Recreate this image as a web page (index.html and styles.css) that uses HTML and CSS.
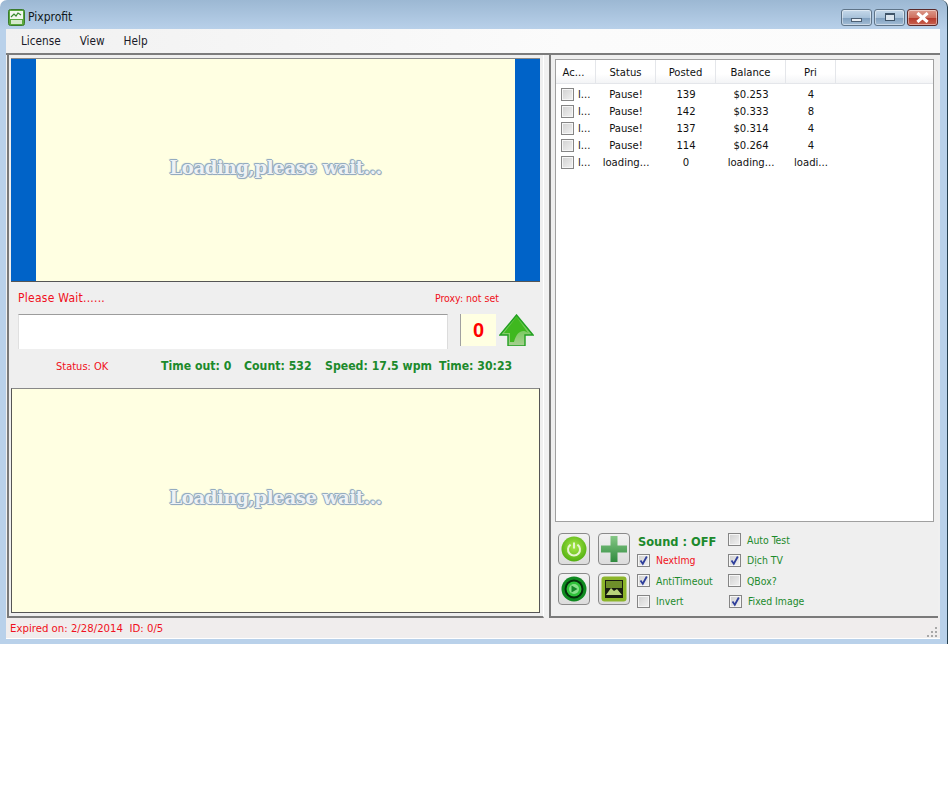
FILE: index.html
```html
<!DOCTYPE html>
<html lang="en">
<head>
<meta charset="utf-8">
<title>Pixprofit</title>
<link rel="stylesheet" href="styles.css">
</head>
<body>
<svg class="defs" width="0" height="0">
  <symbol id="tick" viewBox="0 0 11 11"><path d="M2.500 5.500l2.300 3.300L8.800 1.500" fill="none" stroke="#2f3f9c" stroke-width="1.800"/></symbol>
</svg>
<div class="window">
  <header class="titlebar">
    <svg class="app-icon" width="17" height="17" viewBox="0 0 17 17">
      <rect x="0.5" y="0.5" width="16" height="16" rx="2" fill="#5aa83c" stroke="#3a7a2e"/>
      <rect x="2" y="2" width="13" height="8" fill="#f2f7ee"/>
      <path d="M3 8l3-3 2 2 2-3 3 2" fill="none" stroke="#3a8a2e" stroke-width="1.2"/>
      <rect x="3" y="11" width="11" height="4" fill="#d5e8cc"/>
    </svg>
    <span class="title">Pixprofit</span>
    <div class="controls-win">
      <div class="wbtn"><span class="min-glyph"></span></div>
      <div class="wbtn"><span class="max-glyph"></span></div>
      <div class="wbtn close">
        <svg width="15" height="11" viewBox="0 0 15 11"><path d="M3.500 2l8 7M11.500 2l-8 7" stroke="#fff" stroke-width="3" stroke-linecap="square"/></svg>
      </div>
    </div>
  </header>
  <div class="client">
    <nav class="menu"><span>License</span><span>View</span><span>Help</span></nav>
    <div class="split">
      <section class="left">
        <div class="panel top-panel">
          <div class="blue"></div>
          <div class="stage"><span class="loading">Loading,please wait...</span></div>
          <div class="blue"></div>
        </div>
        <div class="msg-row"><span class="wait">Please Wait......</span><span class="proxy">Proxy: not set</span></div>
        <div class="input-row">
          <div class="answer"></div>
          <div class="count">0</div>
          <svg class="arrow" width="35" height="32" viewBox="0 0 35 32">
            <defs><linearGradient id="ag" x1="0" y1="0" x2="0" y2="1"><stop offset="0" stop-color="#4ec42e"/><stop offset="1" stop-color="#a8cf92"/></linearGradient></defs>
            <path d="M17.5 1L34 21H26V32H9V21H1Z" fill="url(#ag)" stroke="#22a020" stroke-width="1.4"/>
            <path d="M17.5 3L29 19C24 15 18 17 15 28H11V19H5Z" fill="#3fb81f"/>
          </svg>
        </div>
        <div class="status-row">
          <span class="ok">Status: OK</span>
          <span class="stat s1">Time out: 0</span>
          <span class="stat s2">Count: 532</span>
          <span class="stat s3">Speed: 17.5 wpm</span>
          <span class="stat s4">Time: 30:23</span>
        </div>
        <div class="panel bottom-panel"><span class="loading">Loading,please wait...</span></div>
      </section>
      <section class="right">
        <div class="list">
          <div class="row head">
            <span class="ac-head">Ac...</span><span>Status</span><span>Posted</span><span>Balance</span><span>Pri</span>
          </div>
          <div class="row"><span class="acc"><i class="cb"></i>l...</span><span>Pause!</span><span>139</span><span>$0.253</span><span>4</span></div>
          <div class="row"><span class="acc"><i class="cb"></i>l...</span><span>Pause!</span><span>142</span><span>$0.333</span><span>8</span></div>
          <div class="row"><span class="acc"><i class="cb"></i>l...</span><span>Pause!</span><span>137</span><span>$0.314</span><span>4</span></div>
          <div class="row"><span class="acc"><i class="cb"></i>l...</span><span>Pause!</span><span>114</span><span>$0.264</span><span>4</span></div>
          <div class="row"><span class="acc"><i class="cb"></i>l...</span><span>loading...</span><span>0</span><span>loading...</span><span>loadi...</span></div>
        </div>
        <div class="tools">
          <div class="btns">
            <div class="tbtn">
              <svg width="26" height="26" viewBox="0 0 26 26">
                <defs><radialGradient id="pg" cx="0.5" cy="0.4" r="0.6"><stop offset="0" stop-color="#a8e84a"/><stop offset="1" stop-color="#52b010"/></radialGradient></defs>
                <circle cx="13" cy="13" r="12.5" fill="url(#pg)"/>
                <path d="M9.6 8.6a6 6 0 1 0 6.8 0" fill="none" stroke="#e6f5d0" stroke-width="2"/>
                <path d="M13 6.5v6" stroke="#e6f5d0" stroke-width="2"/>
              </svg>
            </div>
            <div class="tbtn">
              <svg width="28" height="28" viewBox="0 0 28 28">
                <defs><linearGradient id="pl" x1="0" y1="0" x2="0" y2="1"><stop offset="0" stop-color="#86c886"/><stop offset="1" stop-color="#2f8a3e"/></linearGradient></defs>
                <path d="M10.500 1h7v9.500H27v7h-9.500V27h-7v-9.500H1v-7h9.500Z" fill="url(#pl)"/>
              </svg>
            </div>
            <div class="tbtn">
              <svg width="26" height="26" viewBox="0 0 26 26">
                <circle cx="13" cy="13" r="12.500" fill="#0f8a20"/>
                <circle cx="13" cy="13" r="9.500" fill="#062e0c"/>
                <circle cx="13" cy="13" r="7.500" fill="#2fc23a"/>
                <circle cx="13" cy="13" r="5" fill="#88e08a"/>
                <path d="M10.500 9.500l6 3.500-6 3.500Z" fill="#148a28"/>
              </svg>
            </div>
            <div class="tbtn">
              <svg width="26" height="26" viewBox="0 0 26 26">
                <rect x="0.500" y="0.500" width="25" height="25" rx="3" fill="#8cb52a"/>
                <rect x="4" y="4" width="18" height="18" fill="#181c10"/>
                <rect x="5" y="5" width="16" height="7" fill="#6f8f2a"/>
                <path d="M5 19l5-7 3 3 3-2 5 6Z" fill="#b9d27a"/>
              </svg>
            </div>
          </div>
          <div class="opts">
            <div class="sound">Sound : OFF</div>
            <label class="opt"><i class="cb"><svg width="11" height="11"><use href="#tick"/></svg></i><span class="red">NextImg</span></label>
            <label class="opt"><i class="cb"><svg width="11" height="11"><use href="#tick"/></svg></i><span>AntiTimeout</span></label>
            <label class="opt"><i class="cb"></i><span>Invert</span></label>
          </div>
          <div class="opts second">
            <label class="opt"><i class="cb"></i><span>Auto Test</span></label>
            <label class="opt"><i class="cb"><svg width="11" height="11"><use href="#tick"/></svg></i><span>Dịch TV</span></label>
            <label class="opt"><i class="cb"></i><span>QBox?</span></label>
            <label class="opt indent"><i class="cb"><svg width="11" height="11"><use href="#tick"/></svg></i><span>Fixed Image</span></label>
          </div>
        </div>
      </section>
    </div>
    <footer class="statusbar">
      <span>Expired on: 2/28/2014&nbsp;&nbsp;ID: 0/5</span>
      <svg class="grip" width="11" height="11" viewBox="0 0 11 11" fill="#a8a8a8">
        <rect x="8" y="0" width="2" height="2"/><rect x="4" y="4" width="2" height="2"/><rect x="8" y="4" width="2" height="2"/>
        <rect x="0" y="8" width="2" height="2"/><rect x="4" y="8" width="2" height="2"/><rect x="8" y="8" width="2" height="2"/>
      </svg>
    </footer>
  </div>
</div>
</body>
</html>
```

FILE: styles.css
```css
* { box-sizing: border-box; }
html, body { margin: 0; padding: 0; background: #fff; }
body {
  width: 949px;
  height: 790px;
  overflow: hidden;
  font: 11.2px "DejaVu Sans Condensed", "Liberation Sans", sans-serif;
  font-stretch: condensed;
  color: #111;
}
.defs { display: block; }
.window {
  width: 948px;
  height: 644px;
  padding: 0 7px 5px 6px;
  background: linear-gradient(#9cb8d3 0, #b9d1ea 30px);
  border-radius: 7px 7px 0 0;
  border-right: 1px solid #26404f;
  display: flex;
  flex-direction: column;
}
.titlebar {
  height: 29px;
  flex: none;
  display: flex;
  align-items: center;
  padding: 5px 2px 0 2px;
}
.app-icon { margin-right: 3px; flex: none; }
.title { font-size: 12px; color: #101820; }
.controls-win { margin-left: auto; display: flex; gap: 2px; }
.wbtn {
  width: 31px;
  height: 17px;
  border: 1px solid #5f7488;
  border-radius: 3px;
  background: linear-gradient(#c6d9ea 0, #a8c2da 50%, #7f9fbe 52%, #a3bdd6 100%);
  box-shadow: inset 0 0 0 1px rgba(255,255,255,.45);
  display: flex;
  align-items: center;
  justify-content: center;
}
.wbtn.close {
  background: linear-gradient(#dc9a8c 0, #cf6f5e 50%, #b5382a 52%, #c96250 100%);
  border-color: #5a2a2a;
}
.min-glyph { width: 11px; height: 4px; margin-top: 5px; background: #e8eef4; border: 1px solid #4c5f73; }
.max-glyph { width: 10px; height: 8px; background: #dbe5ee; border: 1px solid #3f5468; border-top-width: 2px; box-shadow: inset 0 0 0 2px #dbe5ee; }
.client { flex: 1; display: flex; flex-direction: column; background: #f0f0f0; }
.menu {
  height: 24px;
  flex: none;
  display: flex;
  align-items: center;
  gap: 19px;
  padding-left: 15px;
  font-size: 11.7px;
  color: #1a1a28;
  background: linear-gradient(90deg, #f1f1f1, #fbfbfb 60%, #fcfcfc);
}
.split {
  height: 565px;
  flex: none;
  display: flex;
  gap: 5px;
  border-top: 2px solid #7c7c7c;
  padding-left: 1px;
  padding-right: 2px;
}
.left {
  width: 537px;
  flex: none;
  border-left: 2px solid #7a7a7a;
  border-right: 1px solid #fff;
  border-bottom: 2px solid #7a7a7a;
  padding: 3px 4px 0 2px;
  background: #efefef;
  display: flex;
  flex-direction: column;
}
.panel {
  width: 529px;
  border: 1px solid #555;
  border-top-color: #888;
  background: #ffffe2;
  flex: none;
}
.top-panel { height: 224px; display: flex; border: 0; border-bottom: 1px solid #555; border-top: 1px solid #888; }
.blue { width: 25px; flex: none; background: #0063c8; }
.stage { flex: 1; display: flex; align-items: center; justify-content: center; padding-bottom: 6px; }
.bottom-panel { height: 225px; display: flex; align-items: center; justify-content: center; padding-bottom: 6px; }
.loading {
  font: bold 18px "DejaVu Serif", "Liberation Serif", serif;
  letter-spacing: -0.32px;
  color: #eef2f4;
  text-shadow: 1px 0 0 #94abc0, -1px 0 0 #94abc0, 0 1px 0 #94abc0, 0 -1px 0 #94abc0, 1px 1px 1px #94abc0, -1px -1px 1px #94abc0;
}
.msg-row {
  height: 32px;
  flex: none;
  display: flex;
  justify-content: space-between;
  align-items: center;
  padding: 0 40px 0 7px;
  color: #f01020;
}
.wait { font-size: 12px; letter-spacing: .25px; }
.proxy { font-size: 10.5px; margin-top: -1px; }
.input-row { height: 35px; flex: none; display: flex; padding-left: 7px; }
.answer {
  width: 430px;
  height: 35px;
  background: #fff;
  border-top: 1px solid #9c9c9c;
  border-left: 1px solid #e0e0e0;
  border-right: 1px solid #dcdcdc;
}
.count {
  width: 36px;
  height: 32px;
  margin-left: 12px;
  background: #ffffe2;
  border-left: 1px solid #a0a0a0;
  color: #f00;
  font: bold 20px "Liberation Sans", sans-serif;
  text-align: center;
  line-height: 32px;
}
.arrow { margin-left: 3px; flex: none; }
.status-row {
  height: 39px;
  flex: none;
  display: flex;
  align-items: center;
  padding: 0 0 5px 45px;
  color: #1c8a2c;
}
.ok { color: #f01020; width: 105px; font-size: 11px; }
.stat { font: bold 12.2px "DejaVu Sans", "Liberation Sans", sans-serif; font-stretch: condensed; white-space: nowrap; }
.s1 { width: 83px; }
.s2 { width: 81px; }
.s3 { width: 114px; }
.right {
  width: 389px;
  flex: none;
  border-left: 2px solid #7a7a7a;
  border-bottom: 2px solid #7a7a7a;
  padding: 4px 4px 0 4px;
  background: #efefef;
  display: flex;
  flex-direction: column;
}
.list {
  height: 463px;
  flex: none;
  background: #fff;
  border: 1px solid #a0a0a0;
}
.row {
  display: grid;
  grid-template-columns: 40px 60px 60px 70px 50px;
  height: 17px;
  line-height: 17px;
  text-align: center;
  color: #111;
  white-space: nowrap;
}
.row.head {
  height: 24px;
  line-height: 25px;
  margin-bottom: 2px;
  background: linear-gradient(#fff 0, #fff 60%, #f3f4f6 100%);
  border-bottom: 1px solid #e4e6ea;
}
.row.head span { border-right: 1px solid #e4e6ea; height: 23px; }
.row.head .ac-head { padding-right: 4px; }
.acc { display: flex; align-items: center; padding-left: 5px; gap: 4px; }
.cb {
  width: 13px;
  height: 13px;
  flex: none;
  display: block;
  border: 1px solid #858585;
  background: linear-gradient(135deg, #d0d0d0, #f2f2f2);
  box-shadow: inset 0 0 0 1px #f6f6f6;
}
.cb svg { display: block; }
.tools { flex: 1; display: flex; padding: 11px 0 0 3px; }
.btns { display: grid; grid-template-columns: 32px 32px; grid-auto-rows: 32px; gap: 8px; align-content: start; }
.tbtn {
  border: 1px solid #8a8a8a;
  border-radius: 4px;
  background: linear-gradient(#f2f2f2, #dcdcdc);
  display: flex;
  align-items: center;
  justify-content: center;
}
.opts { width: 91px; margin: -3.5px 0 0 7px; display: grid; grid-auto-rows: 20.5px; align-items: center; color: #1c8a2c; }
.opts.second { margin-left: 0; }
.sound { font: bold 12.7px "DejaVu Sans", "Liberation Sans", sans-serif; font-stretch: condensed; color: #1c8a2c; white-space: nowrap; margin: 4px 0 0 1px; }
.opt { display: flex; align-items: center; gap: 6px; font-size: 10.4px; white-space: nowrap; }
.opt.indent { margin-left: 1px; }
.red { color: #f01020; }
.statusbar {
  flex: 1;
  display: flex;
  align-items: center;
  justify-content: space-between;
  padding: 1px 2px 0 4px;
  font-size: 11.3px;
  color: #f01020;
  background: #f0eded;
  border-bottom: 1px solid #fff;
}
.grip { margin-top: 7px; }
```
